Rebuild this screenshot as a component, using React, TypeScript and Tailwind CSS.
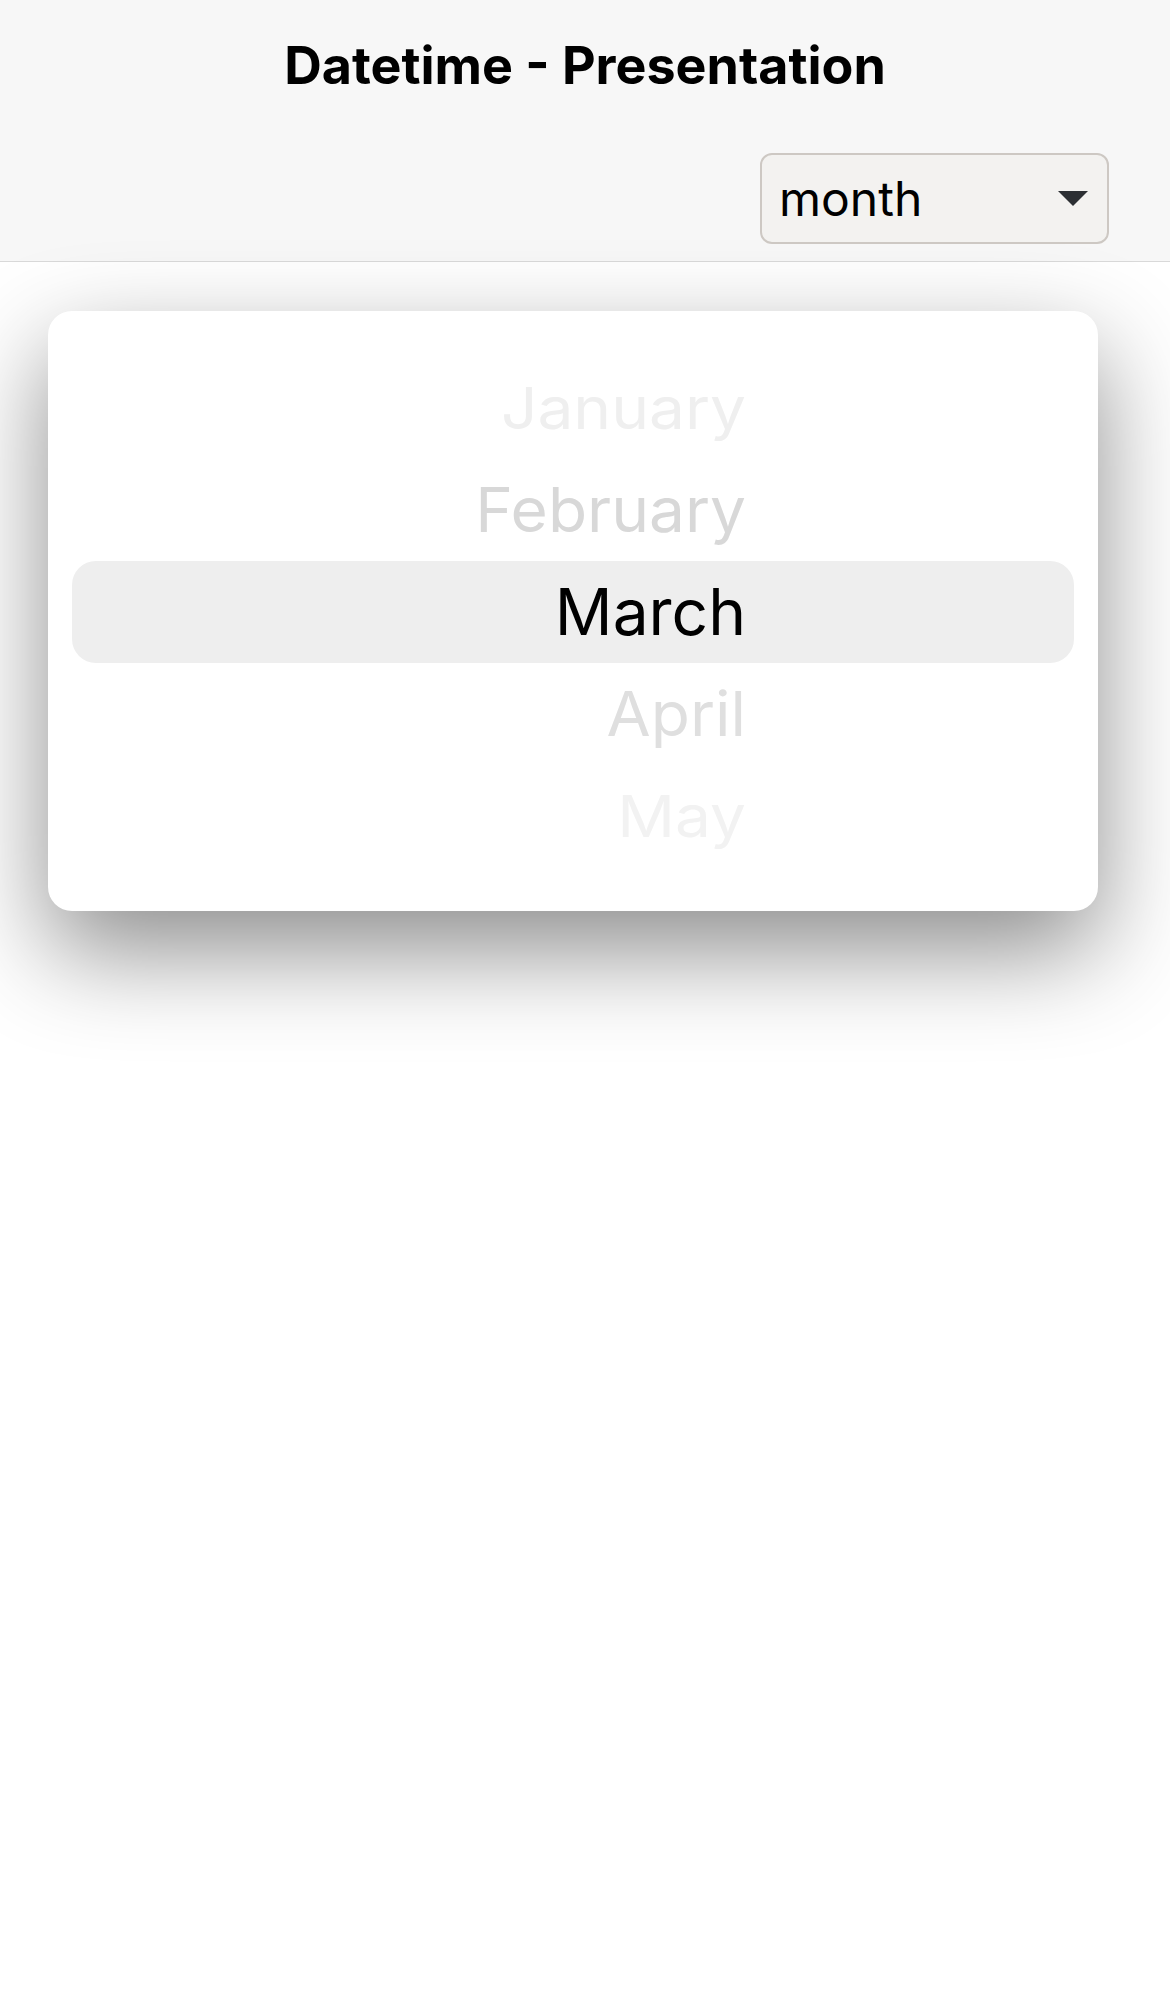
import React from "react";

const months = [
  { name: "January", cls: "text-[#efefef] scale-y-[0.9]" },
  { name: "February", cls: "text-[#d8d8d8] scale-y-[0.97]" },
  { name: "March", cls: "text-black" },
  { name: "April", cls: "text-[#dfdfdf] scale-y-[0.97]" },
  { name: "May", cls: "text-[#f2f2f2] scale-y-[0.9]" },
];

const MonthSelect = () => (
  <div className="w-[349px] h-[91px] flex items-center justify-between rounded-[12px] border-2 border-[#cdc8c3] bg-[#f3f2f0] pl-[17px] pr-[19px]">
    <span className="text-[48px] leading-none text-black">month</span>
    <svg width="30" height="15" viewBox="0 0 30 15">
      <path d="M0 0 L30 0 L15 15 Z" fill="#2c2f33" />
    </svg>
  </div>
);

export default function App() {
  return (
    <div className="min-h-[1995px] bg-white font-['Inter',sans-serif]">
      <header className="bg-[#f7f7f7] border-b border-[#d9d9d9]">
        <div className="h-[132px] flex items-center justify-center">
          <h1 className="text-[52px] font-bold text-black">Datetime - Presentation</h1>
        </div>
        <div className="flex justify-end pr-[61px] pt-[21px] pb-[17px]">
          <MonthSelect />
        </div>
      </header>

      <div className="pl-[48px] pt-[49px]">
        <div className="w-[1050px] h-[600px] rounded-[24px] bg-white px-6 pt-[46px] pb-[42px] shadow-[0_40px_100px_rgba(0,0,0,0.45)]">
          {months.map((m) => (
            <div
              key={m.name}
              className={
                m.name === "March"
                  ? "h-[102px] flex items-center rounded-[24px] bg-[#eeeeee]"
                  : "h-[102px] flex items-center"
              }
            >
              <div className={"w-[674px] text-right text-[64px] leading-none " + m.cls}>{m.name}</div>
            </div>
          ))}
        </div>
      </div>
    </div>
  );
}
